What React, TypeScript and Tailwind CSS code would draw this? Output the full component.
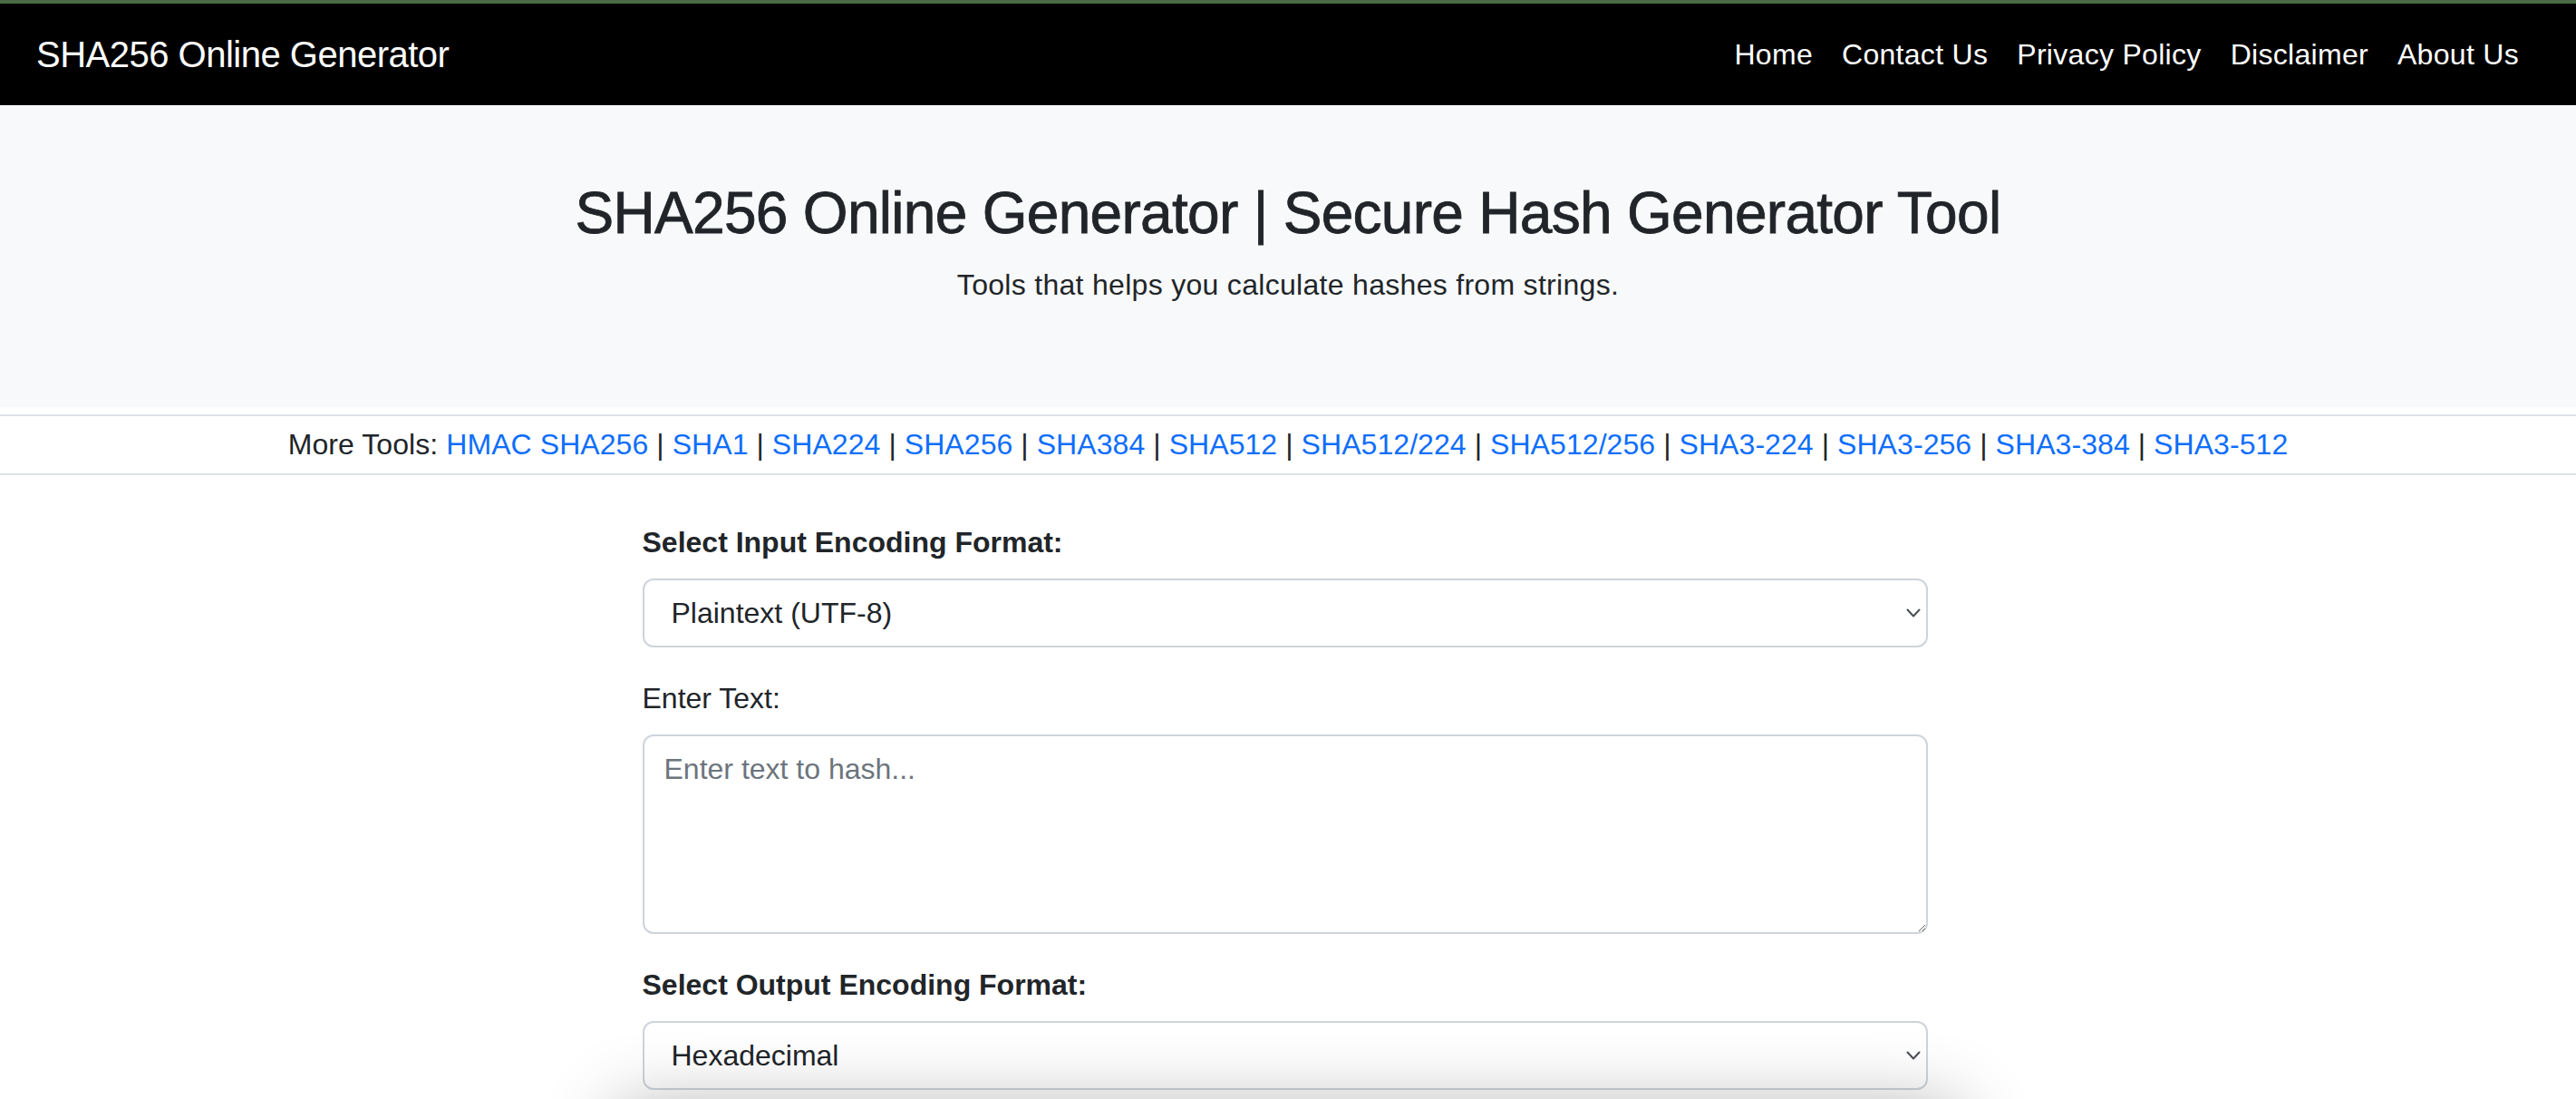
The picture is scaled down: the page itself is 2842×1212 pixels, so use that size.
const links = ['Home', 'Contact Us', 'Privacy Policy', 'Disclaimer', 'About Us']

const tools = [
  'HMAC SHA256',
  'SHA1',
  'SHA224',
  'SHA256',
  'SHA384',
  'SHA512',
  'SHA512/224',
  'SHA512/256',
  'SHA3-224',
  'SHA3-256',
  'SHA3-384',
  'SHA3-512',
]

function Chevron() {
  return (
    <svg width="16" height="10" viewBox="0 0 16 10" fill="none" stroke="#4b4f54" strokeWidth="2" strokeLinecap="round" strokeLinejoin="round">
      <path d="M1.5 1.5 8 8.5 14.5 1.5" />
    </svg>
  )
}

function SelectBox({ value }: { value: string }) {
  return (
    <div className="flex h-[76px] w-full items-center justify-between rounded-[12px] border-2 border-[#ced4da] bg-white pl-[30px] pr-[6px] text-[32px] text-[#212529]">
      <span>{value}</span>
      <Chevron />
    </div>
  )
}

export default function App() {
  return (
    <div className="min-h-screen bg-white font-['Liberation_Sans',Arial,sans-serif] text-[#212529]">
      <div className="h-1 bg-[#4a6b45]" />
      <nav className="flex h-[112px] items-center justify-between bg-black pl-10 pr-[47px]">
        <a className="text-[40px] tracking-[-0.5px] text-white">SHA256 Online Generator</a>
        <ul className="flex text-[32px] tracking-[0.3px] text-white">
          {links.map((l) => (
            <li key={l}>
              <a className="px-4">{l}</a>
            </li>
          ))}
        </ul>
      </nav>

      <header className="bg-[#f8f9fa] pb-[111px] pt-[81px] text-center">
        <h1 className="mb-4 text-[64px] font-medium leading-[1.2] tracking-[-0.7px] [-webkit-text-stroke:0.8px_#212529]">
          SHA256 Online Generator | Secure Hash Generator Tool
        </h1>
        <p className="text-[32px] leading-[48px] tracking-[0.3px]">Tools that helps you calculate hashes from strings.</p>
      </header>

      <div className="mt-2 border-y-2 border-[#dee2e6] pb-2 pt-[7px] text-center text-[32px] leading-[48px] tracking-[0.07px]">
        More Tools:{' '}
        {tools.map((t, i) => (
          <span key={t}>
            {i > 0 && ' | '}
            <a className="text-[#0d6efd]">{t}</a>
          </span>
        ))}
      </div>

      <div className="flex justify-center pr-[7px]">
        <main className="mt-[50px] w-[1418px]">
          <label className="mb-4 block text-[32px] font-bold leading-[48px]">Select Input Encoding Format:</label>
          <SelectBox value="Plaintext (UTF-8)" />

          <label className="mb-4 mt-8 block text-[32px] leading-[48px]">Enter Text:</label>
          <textarea
            className="block h-[220px] w-full rounded-[12px] border-2 border-[#ced4da] bg-white px-[22px] py-3 text-[32px] leading-[48px] text-[#212529] outline-none placeholder:text-[#6c757d]"
            placeholder="Enter text to hash..."
          />

          <label className="mb-4 mt-8 block text-[32px] font-bold leading-[48px]">Select Output Encoding Format:</label>
          <SelectBox value="Hexadecimal" />
        </main>
      </div>

      <div className="relative mx-auto mt-[18px] h-[200px] w-[1480px] shadow-[0_0_80px_rgba(0,0,0,0.3)]" />
    </div>
  )
}
